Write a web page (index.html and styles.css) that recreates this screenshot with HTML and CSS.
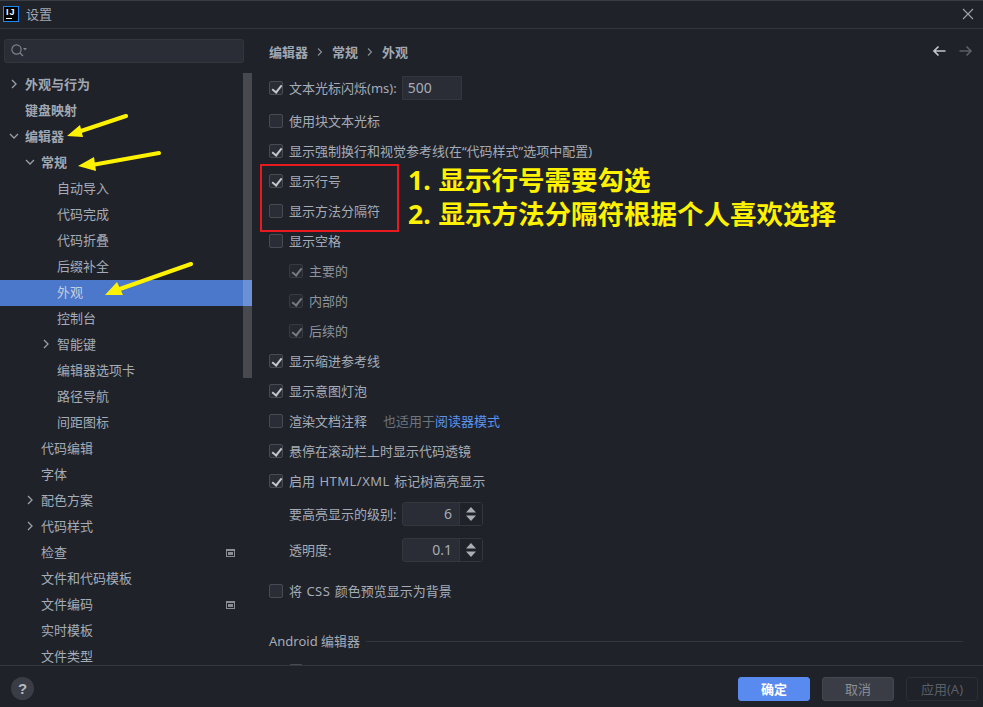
FILE: index.html
```html
<!DOCTYPE html>
<html lang="zh">
<head>
<meta charset="utf-8">
<title>设置</title>
<link rel="stylesheet" href="styles.css">
</head>
<body>
<div class="dialog">
  <header class="titlebar">
    <span class="logo"><span class="logo-text">IJ</span><span class="logo-bar"></span></span>
    <span class="title">设置</span>
    <svg class="close" width="12" height="12" viewBox="0 0 12 12"><path d="M1 1l10 10M11 1L1 11" stroke="#a0a4ab" stroke-width="1.1" fill="none"/></svg>
  </header>
  <div class="main">
    <aside class="sidebar">
      <div class="search">
        <svg width="18" height="16" viewBox="0 0 18 16"><circle cx="6.500" cy="6.500" r="4.600" stroke="#7d828a" stroke-width="1.200" fill="none"/><path d="M10 10l3 3" stroke="#7d828a" stroke-width="1.300"/><path d="M13 5h4l-2 2.500z" fill="#7d828a"/></svg>
      </div>
      <div class="tree-wrap">
        <div class="scrollbar"></div>
        <ul class="tree">
          <li class="node l0 strong"><svg class="chev" viewBox="0 0 10 10"><path d="M3 1l4 4-4 4"/></svg>外观与行为</li>
          <li class="node l0 strong"><span class="chev"></span>键盘映射</li>
          <li class="node l0 strong"><svg class="chev" viewBox="0 0 10 10"><path d="M1 3l4 4 4-4"/></svg>编辑器</li>
          <li class="node l1 strong"><svg class="chev" viewBox="0 0 10 10"><path d="M1 3l4 4 4-4"/></svg>常规</li>
          <li class="node l2">自动导入</li>
          <li class="node l2">代码完成</li>
          <li class="node l2">代码折叠</li>
          <li class="node l2">后缀补全</li>
          <li class="node l2 selected">外观</li>
          <li class="node l2">控制台</li>
          <li class="node l1b"><svg class="chev" viewBox="0 0 10 10"><path d="M3 1l4 4-4 4"/></svg>智能键</li>
          <li class="node l2">编辑器选项卡</li>
          <li class="node l2">路径导航</li>
          <li class="node l2">间距图标</li>
          <li class="node l3">代码编辑</li>
          <li class="node l3">字体</li>
          <li class="node l4"><svg class="chev" viewBox="0 0 10 10"><path d="M3 1l4 4-4 4"/></svg>配色方案</li>
          <li class="node l4"><svg class="chev" viewBox="0 0 10 10"><path d="M3 1l4 4-4 4"/></svg>代码样式</li>
          <li class="node l3">检查<span class="badge"></span></li>
          <li class="node l3">文件和代码模板</li>
          <li class="node l3">文件编码<span class="badge"></span></li>
          <li class="node l3">实时模板</li>
          <li class="node l3">文件类型</li>
        </ul>
      </div>
    </aside>
    <section class="content">
      <div class="crumbbar">
        <nav class="crumbs"><span>编辑器</span><svg class="sep" viewBox="0 0 6 10"><path d="M1 1.500L4.500 5 1 8.500"/></svg><span>常规</span><svg class="sep" viewBox="0 0 6 10"><path d="M1 1.500L4.500 5 1 8.500"/></svg><span>外观</span></nav>
        <svg class="nav" width="14" height="12" viewBox="0 0 14 12"><path d="M13.500 6H2M6.500 1.500L2 6l4.500 4.500" stroke="#c1c5cb" stroke-width="1.700" fill="none"/></svg>
        <svg class="nav" width="14" height="12" viewBox="0 0 14 12"><path d="M.5 6H12M7.500 1.500L12 6l-4.500 4.500" stroke="#5b5e64" stroke-width="1.700" fill="none"/></svg>
      </div>
      <div class="form">
        <label class="row first"><span class="cb on"></span>文本光标闪烁(ms):<span class="field">500</span></label>
        <label class="row"><span class="cb"></span>使用块文本光标</label>
        <label class="row"><span class="cb on"></span>显示强制换行和视觉参考线(在“代码样式”选项中配置)</label>
        <label class="row"><span class="cb on"></span>显示行号</label>
        <label class="row"><span class="cb"></span>显示方法分隔符</label>
        <label class="row"><span class="cb"></span>显示空格</label>
        <label class="row sub dim"><span class="cb on"></span>主要的</label>
        <label class="row sub dim"><span class="cb on"></span>内部的</label>
        <label class="row sub dim"><span class="cb on"></span>后续的</label>
        <label class="row"><span class="cb on"></span>显示缩进参考线</label>
        <label class="row"><span class="cb on"></span>显示意图灯泡</label>
        <label class="row"><span class="cb"></span>渲染文档注释<span class="hint">也适用于<a class="link">阅读器模式</a></span></label>
        <label class="row"><span class="cb on"></span>悬停在滚动栏上时显示代码透镜</label>
        <label class="row"><span class="cb on"></span>启用 <span class="latin">HTML/XML</span> 标记树高亮显示</label>
        <div class="spin-row"><span class="spin-label">要高亮显示的级别:</span><span class="spin"><span class="spin-val">6</span><span class="spin-btn"><svg width="10" height="14" viewBox="0 0 10 14"><path d="M5 0l5 5.500H0zM5 14L0 8.500h10z" fill="#a9adb4"/></svg></span></span></div>
        <div class="spin-row"><span class="spin-label">透明度:</span><span class="spin"><span class="spin-val">0.1</span><span class="spin-btn"><svg width="10" height="14" viewBox="0 0 10 14"><path d="M5 0l5 5.500H0zM5 14L0 8.500h10z" fill="#a9adb4"/></svg></span></span></div>
        <label class="row gap"><span class="cb"></span>将 <span class="latin">CSS</span> 颜色预览显示为背景</label>
        <div class="group"><span>Android 编辑器</span><i></i></div>
        <label class="row sub clipped"><span class="cb"></span>显示</label>
      </div>
    </section>
  </div>
  <footer class="footer">
    <span class="help">?</span>
    <span class="btn primary">确定</span>
    <span class="btn secondary">取消</span>
    <span class="btn disabled">应用(A)</span>
  </footer>
  <div class="redbox"></div>
  <div class="note n1">1. 显示行号需要勾选</div>
  <div class="note n2">2. 显示方法分隔符根据个人喜欢选择</div>
  <svg class="arrows" width="983" height="707" viewBox="0 0 983 707">
    <path d="M126 116L78 132M159 153L92 165M191 264L117 290" stroke="#fff200" stroke-width="4" stroke-linecap="round" fill="none"/>
    <path d="M67 136L80 125L83 137zM78 166L94 157L96 171zM105 295L117 282L123 295z" fill="#fff200"/>
  </svg>
</div>
</body>
</html>
```
FILE: styles.css
```css
* { box-sizing: border-box; }
html, body { margin: 0; height: 100%; }
body { background: #1f2229; overflow: hidden; }
.dialog {
  position: relative;
  width: 983px;
  height: 707px;
  display: flex;
  flex-direction: column;
  background: #1f2229;
  color: #a5acb7;
  font: 13px/18px "Noto Sans", "Noto Sans CJK SC", sans-serif;
}
.titlebar {
  height: 29px;
  flex: none;
  display: flex;
  align-items: center;
  padding: 0 9px 1px 3px;
  border-top: 1px solid #3a3d43;
  border-bottom: 1px solid #33363c;
}
.logo {
  width: 16px;
  height: 16px;
  background: #000;
  border: 1px solid #1e88f0;
  display: flex;
  flex-direction: column;
  padding: 0 1px;
  color: #fff;
  font: 700 9px/11px "Liberation Sans", sans-serif;
}
.logo-text { height: 11px; padding-left: 1px; letter-spacing: 1px; }
.logo-bar { width: 6px; height: 1px; margin-left: 1px; background: #fff; }
.title { margin-left: 7px; color: #a3a9b3; }
.close { margin-left: auto; }
.main { flex: 1; display: flex; min-height: 0; }
.sidebar {
  width: 252px;
  flex: none;
  display: flex;
  flex-direction: column;
  overflow: hidden;
}
.search {
  margin: 10px 8px 0 4px;
  height: 24px;
  flex: none;
  background: #2a2d35;
  border: 1px solid #33363c;
  border-radius: 3px;
  display: flex;
  align-items: center;
  padding-left: 5px;
}
.tree-wrap { position: relative; flex: 1; min-height: 0; margin-top: 9px; }
.scrollbar {
  position: absolute;
  z-index: 1;
  right: 0;
  top: 1px;
  width: 9px;
  height: 305px;
  background: rgba(255, 255, 255, 0.18);
}
.tree { list-style: none; margin: 0; padding: 0; }
.node {
  height: 26px;
  padding-bottom: 3px;
  display: flex;
  align-items: center;
  position: relative;
  white-space: nowrap;
}
.strong { font-weight: 700; color: #a0a7b2; }
.chev { width: 10px; height: 10px; flex: none; margin-right: 6px; fill: none; stroke: #9aa0a8; stroke-width: 1.3; }
.l0 { padding-left: 9px; }
.l1 { padding-left: 25px; }
.l1b { padding-left: 41px; }
.l2 { padding-left: 57px; }
.l3 { padding-left: 41px; }
.l4 { padding-left: 25px; }
.selected { background: #4c78cc; color: #c5cede; }
.badge {
  position: absolute;
  left: 226px;
  top: 9px;
  width: 9px;
  height: 8px;
  border: 1px solid #8a8f96;
  border-top-width: 2px;
  background: #1f2229;
}
.badge::after { content: ""; display: block; margin: 1px; height: 3px; background: #8a8f96; }
.content { flex: 1; min-width: 0; overflow: hidden; padding: 0 10px 0 17px; }
.crumbbar { height: 41px; display: flex; align-items: center; gap: 13px; padding-top: 5px; }
.crumbs { display: flex; align-items: center; font-weight: 700; color: #a0a7b2; margin-right: auto; }
.sep { width: 6px; height: 10px; margin: 0 9px; fill: none; stroke: #8a8f96; stroke-width: 1.1; }
.nav { margin-top: -3px; }
.form { display: flex; flex-direction: column; padding-right: 10px; word-spacing: 1px; }
.latin { letter-spacing: 0.5px; }
.row { height: 30px; flex: none; display: flex; align-items: center; white-space: pre; padding-bottom: 1px; }
.row.first { height: 36px; }
.cb {
  width: 14px;
  height: 14px;
  flex: none;
  margin: 1px 6px 0 0;
  border: 1px solid #474b54;
  border-radius: 2px;
  background: #2a2d35;
  position: relative;
}
.cb.on::after {
  content: "";
  position: absolute;
  left: 4px;
  top: 1px;
  width: 4px;
  height: 8px;
  border: solid #c4c8ce;
  border-width: 0 2px 2px 0;
  transform: rotate(38deg);
}
.sub { padding-left: 20px; }
.dim { color: #8e949e; }
.dim .cb { border-color: #363a42; background: #25282f; }
.dim .cb.on::after { border-color: #767b83; }
.field {
  margin: 1px 0 0 5px;
  width: 60px;
  height: 24px;
  background: #2a2d35;
  border: 1px solid #33363c;
  padding-left: 5px;
  line-height: 22px;
  font-size: 14px;
}
.hint { margin-left: 16px; color: #6c7480; }
.link { color: #5b93ee; }
.spin-row { height: 36px; flex: none; display: flex; align-items: center; padding-left: 20px; }
.spin-label { width: 113px; margin-top: -1px; }
.spin {
  width: 81px;
  height: 24px;
  display: flex;
  background: #2a2d35;
  border: 1px solid #33363c;
  border-radius: 3px;
}
.spin-val { flex: 1; text-align: right; padding-right: 7px; line-height: 22px; font-size: 14px; }
.spin-btn { width: 23px; border-left: 1px solid #33363c; display: flex; align-items: center; justify-content: center; background: #1f2229; }
.gap { margin-top: 8px; }
.group { display: flex; align-items: center; height: 18px; margin-top: 26px; gap: 6px; white-space: nowrap; word-spacing: 0; }
.group i { flex: 1; height: 1px; background: #33363c; }
.clipped { margin-top: 6px; }
.footer {
  height: 42px;
  flex: none;
  display: flex;
  align-items: center;
  border-top: 1px solid #33363c;
  padding: 4px 5px 0 11px;
  gap: 12px;
}
.help {
  width: 23px;
  height: 23px;
  border-radius: 50%;
  background: #3a3d45;
  color: #b4b9c0;
  font: 700 15px/23px "Liberation Sans", sans-serif;
  text-align: center;
  margin-right: auto;
}
.btn { width: 72px; height: 24px; border-radius: 3px; text-align: center; line-height: 22px; border: 1px solid transparent; }
.primary { background: #588af0; color: #fff; font-weight: 700; border-color: #588af0; }
.secondary { background: #3a3d45; color: #8b9099; border-color: #44474e; }
.disabled { color: #5a5e66; border-color: #2c2f36; }
.redbox {
  position: absolute;
  left: 260px;
  top: 164px;
  width: 139px;
  height: 68px;
  border: 2px solid #e8191f;
}
.note {
  position: absolute;
  left: 408px;
  color: #fff200;
  font: 700 26.500px/30px "Noto Sans", "Noto Sans CJK SC", sans-serif;
  word-spacing: 1px;
  white-space: nowrap;
}
.n1 { top: 165px; }
.n2 { top: 199px; }
.arrows { position: absolute; left: 0; top: 0; pointer-events: none; }
```
